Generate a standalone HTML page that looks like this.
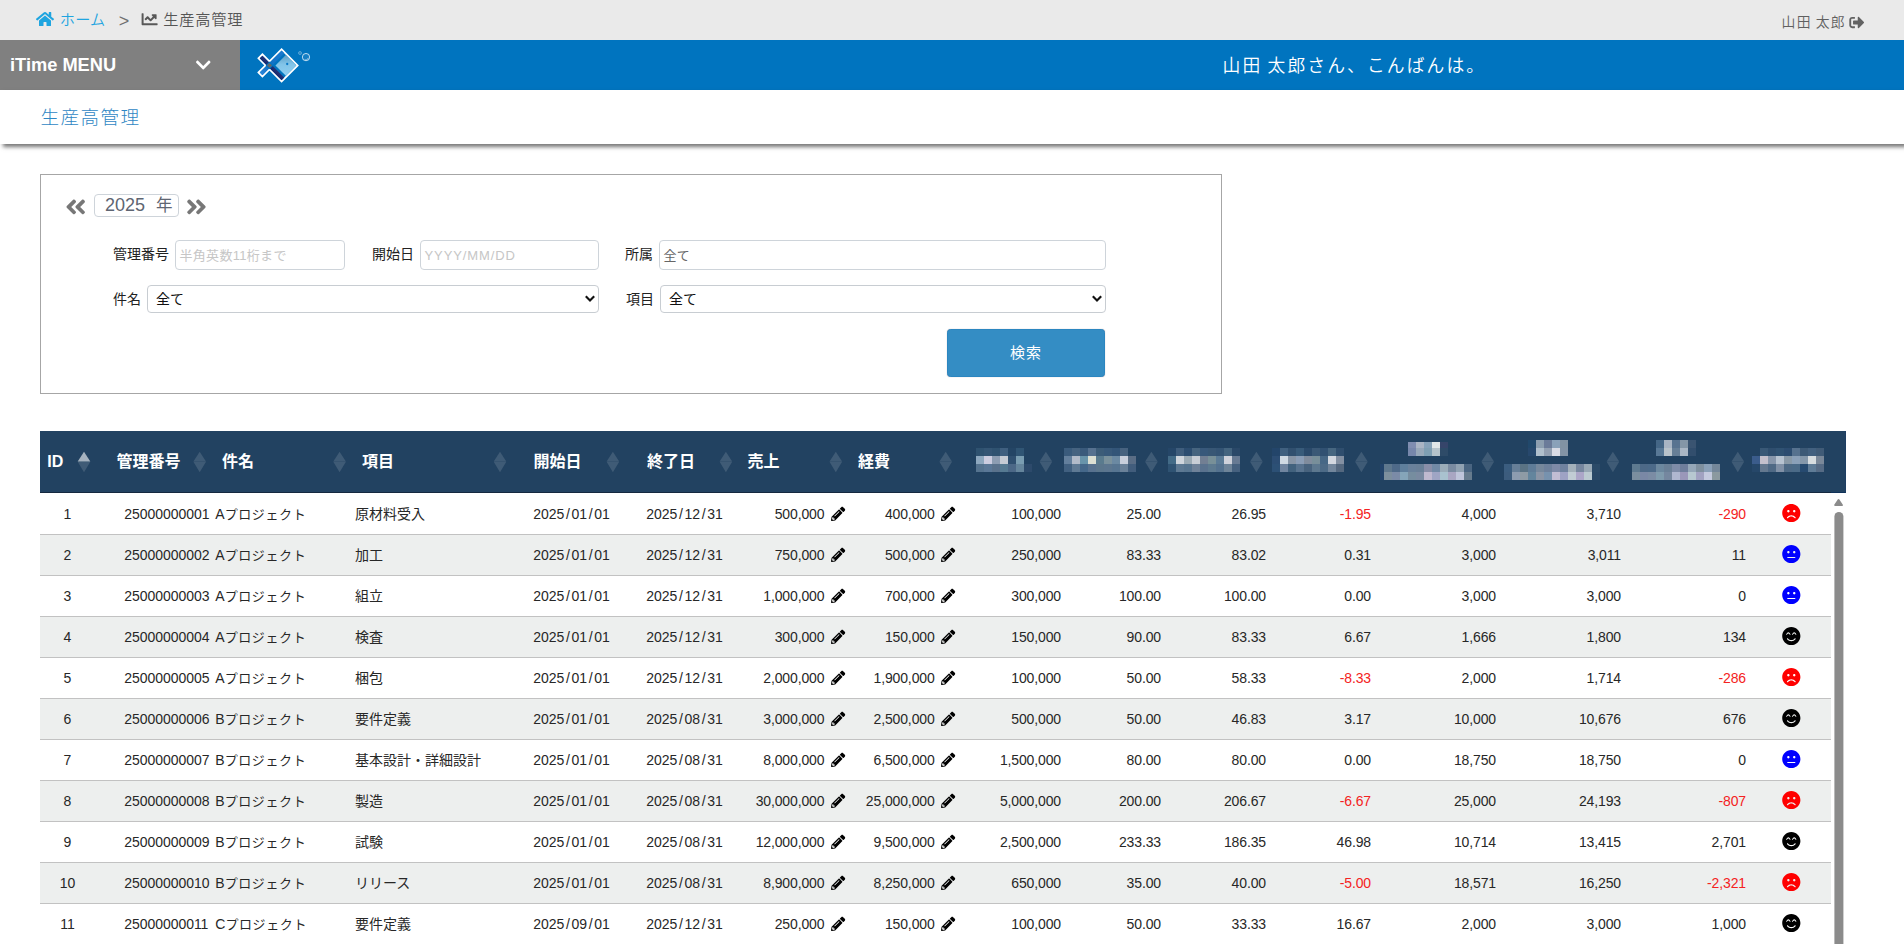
<!DOCTYPE html>
<html lang="ja">
<head>
<meta charset="utf-8">
<title>生産高管理</title>
<style>
*{box-sizing:border-box;}
html,body{margin:0;padding:0;}
body{width:1904px;height:944px;overflow:hidden;background:#fff;position:relative;
  font-family:"Liberation Sans","Noto Sans CJK JP",sans-serif;color:#222;}
.abs{position:absolute;}
svg{position:absolute;display:block;overflow:visible;}
#crumb{left:0;top:0;width:1904px;height:40px;background:#eaeaea;}
.ct{position:absolute;top:0;height:40px;line-height:40px;font-size:16px;white-space:nowrap;}
#menu{left:0;top:40px;width:240px;height:50px;background:#808080;color:#fff;}
#menu .lbl{position:absolute;left:10px;top:0;line-height:50px;font-size:18.250px;font-weight:bold;white-space:nowrap;}
#bluebar{left:240px;top:40px;width:1664px;height:50px;background:#0074bf;}
#welcome{left:1222.500px;top:41px;height:50px;line-height:50px;color:#fff;font-size:17.800px;white-space:nowrap;letter-spacing:2.100px;word-spacing:-1.800px;font-weight:350;}
#titlebar{left:0;top:90px;width:1904px;height:54px;background:#fff;box-shadow:3px 3px 4px rgba(0,0,0,.54);}
#title{left:40.500px;top:90.500px;height:55px;line-height:53px;font-size:18.600px;color:#2f87c4;white-space:nowrap;letter-spacing:1.400px;font-weight:300;}
#sbox{left:40px;top:174px;width:1182px;height:220px;border:1px solid #a6a6a6;background:#fff;}
.lab{position:absolute;font-size:14px;color:#222;white-space:nowrap;line-height:30px;height:30px;}
.inp{position:absolute;height:30px;line-height:29px;border:1px solid #ced4da;border-radius:4px;background:#fff;font-size:13px;color:#c6c6c6;white-space:nowrap;padding-left:3.500px;letter-spacing:0.3px;}
.sel{position:absolute;height:28px;line-height:26px;border:1px solid #c8cdd2;border-radius:4px;background:#fff;font-size:14px;color:#111;white-space:nowrap;padding-left:8px;}
#year{left:94px;top:194px;width:85px;height:23px;border:1px solid #ced4da;border-radius:4px;font-size:18px;line-height:20px;color:#5e6572;white-space:nowrap;padding-left:10px;}
#btn{left:947px;top:329px;width:158px;height:48px;background:#348dc4;border:1px solid #2b86c0;border-radius:3.500px;box-shadow:0 0 1px rgba(80,60,80,.45);color:#fff;font-size:15px;text-align:center;line-height:45px;letter-spacing:1px;}
#thead{left:40px;top:431px;width:1806px;height:62px;background:#224261;border-bottom:1px solid #10325a;border-right:1px solid #1e3e63;}
.th{position:absolute;top:431px;height:62px;line-height:61px;color:#fff;font-weight:bold;font-size:16px;white-space:nowrap;}
.row{position:absolute;left:40px;width:1791px;height:41px;border-bottom:1px solid #c2c2c2;font-size:14px;color:#272727;}
.row.odd{background:#edefee;}
.row span{position:absolute;top:0;height:40px;line-height:40px;white-space:nowrap;}
.row i{font-style:normal;display:inline-block;width:7.300px;text-align:center;}
.r{text-align:right;}
.neg{color:#f42222;}
.n{letter-spacing:-0.05px;}
.r{letter-spacing:-0.13px;}
.k b{font-weight:normal;font-size:13px;letter-spacing:0.600px;}
.c{text-align:center;}
</style>
</head>
<body>
<div id="crumb" class="abs"></div>
<svg style="left:36px;top:11px" width="19" height="17" viewBox="0 0 19 17"><path fill="#1fa5e0" transform="translate(0.000,0.000) scale(0.03125)" d="M280.37 148.26L96 300.11V464a16 16 0 0 0 16 16l112.06-.29a16 16 0 0 0 15.92-16V368a16 16 0 0 1 16-16h64a16 16 0 0 1 16 16v95.64a16 16 0 0 0 16 16.05L464 480a16 16 0 0 0 16-16V300L295.67 148.26a12.19 12.19 0 0 0-15.3 0zM571.6 251.47L488 182.56V44.05a12 12 0 0 0-12-12h-56a12 12 0 0 0-12 12v72.61L318.47 43a48 48 0 0 0-61 0L4.34 251.47a12 12 0 0 0-1.6 16.9l25.5 31A12 12 0 0 0 45.15 301l235.22-193.74a12.19 12.19 0 0 1 15.3 0L530.9 301a12 12 0 0 0 16.9-1.6l25.5-31a12 12 0 0 0-1.7-16.93z"/></svg>
<div class="ct" style="left:59.800px;color:#1fa5e0;letter-spacing:0.200px;font-weight:350;font-size:15.200px;top:0.300px">ホーム</div>
<div class="ct" style="left:118.800px;color:#707070;font-size:18px;top:0.5px">&gt;</div>
<svg style="left:141px;top:11px" width="18" height="18" viewBox="0 0 18 18"><path fill="#585858" transform="translate(0.600,0.300) scale(0.03125)" d="M496 384H64V80c0-8.84-7.16-16-16-16H16C7.16 64 0 71.16 0 80v336c0 17.67 14.33 32 32 32h464c8.84 0 16-7.16 16-16v-32c0-8.84-7.16-16-16-16zM464 96H345.94c-21.38 0-32.09 25.85-16.97 40.97l32.4 32.4L288 242.75l-73.37-73.37c-12.5-12.5-32.76-12.5-45.25 0l-68.69 68.69c-6.25 6.25-6.25 16.38 0 22.63l22.62 22.62c6.25 6.25 16.38 6.25 22.63 0L192 237.25l73.37 73.37c12.5 12.5 32.76 12.5 45.25 0l96-96 32.4 32.4c15.12 15.12 40.97 4.41 40.97-16.97V112c.01-8.84-7.15-16-15.99-16z"/></svg>
<div class="ct" style="left:163.300px;color:#555;font-weight:350;font-size:15.200px;letter-spacing:0.800px;top:0.300px">生産高管理</div>
<div class="ct" style="left:1781.600px;color:#606060;font-size:13.800px;top:2.600px;font-weight:350;letter-spacing:1.250px;word-spacing:-1px">山田 太郎</div>
<svg style="left:1849px;top:15px" width="17" height="16" viewBox="0 0 17 16"><path fill="#626262" transform="translate(0.300,0.000) scale(0.02930)" d="M497 273L329 441c-15 15-41 4.5-41-17v-96H152c-13.3 0-24-10.7-24-24v-96c0-13.3 10.700-24 24-24h136V88c0-21.400 25.900-32 41-17l168 168c9.300 9.400 9.300 24.600 0 34zM192 436v-40c0-6.600-5.400-12-12-12H96c-17.700 0-32-14.300-32-32V160c0-17.700 14.300-32 32-32h84c6.600 0 12-5.400 12-12V76c0-6.600-5.400-12-12-12H96c-53 0-96 43-96 96v192c0 53 43 96 96 96h84c6.600 0 12-5.400 12-12z"/></svg>
<div id="menu" class="abs"><span class="lbl">iTime MENU</span></div>
<svg style="left:195px;top:56px" width="17" height="19" viewBox="0 0 17 19"><path fill="#fff" transform="translate(0.800,0.500) scale(0.03320)" d="M207.029 381.476L12.686 187.132c-9.373-9.373-9.373-24.569 0-33.941l22.667-22.667c9.357-9.357 24.522-9.375 33.901-.04L224 284.505l154.745-154.021c9.379-9.335 24.544-9.317 33.901.04l22.667 22.667c9.373 9.373 9.373 24.569 0 33.941L240.971 381.476c-9.373 9.372-24.569 9.372-33.942 0z"/></svg>
<div id="bluebar" class="abs"></div>
<svg style="left:240px;top:40px" width="90" height="50" viewBox="240 40 90 50">
<defs>
<linearGradient id="lgBody" x1="0" y1="1" x2="1" y2="0"><stop offset="0" stop-color="#8fd0f2"/><stop offset="0.55" stop-color="#82c4e8"/><stop offset="1" stop-color="#5c9fc6"/></linearGradient>
<linearGradient id="lgNavy" x1="0" y1="0" x2="1" y2="0"><stop offset="0" stop-color="#16256a"/><stop offset="1" stop-color="#24357a"/></linearGradient>
<linearGradient id="lgMid" x1="0" y1="0" x2="1" y2="0"><stop offset="0" stop-color="#2a86da"/><stop offset="0.35" stop-color="#0f6fc4"/><stop offset="1" stop-color="#1b7ace"/></linearGradient>
</defs>
<g transform="translate(269.500,65.400) rotate(-45)">
<path d="M-12.800,-2.800H-2.800V-12.800H2.800V-2.800H19.900V19.900H-2.800V2.800H-12.800Z" fill="#0074bf" stroke="#fff" stroke-width="1.8" stroke-linejoin="miter"/>
<rect x="-11.900" y="-1.900" width="30.900" height="3.800" fill="url(#lgMid)"/>
<rect x="-1.900" y="-11.900" width="3.800" height="30.900" fill="url(#lgNavy)"/>
<rect x="-2.700" y="-2.700" width="5.400" height="5.400" fill="#0074bf"/>
<rect x="4.200" y="4.200" width="14.700" height="14.700" fill="url(#lgBody)"/>
<rect x="-1.750" y="-1.750" width="3.500" height="3.500" fill="#666"/>
</g>
<circle cx="287.200" cy="64" r="1.150" fill="#0a78c6"/>
<circle cx="300" cy="53" r="1.500" fill="#fff" fill-opacity=".12" stroke="#fff" stroke-opacity=".5" stroke-width=".6"/>
<circle cx="306" cy="57.100" r="3.650" fill="#fff" fill-opacity=".08" stroke="#fff" stroke-opacity=".8" stroke-width=".9"/>
<path d="M304.800,59.500a2.300,2.300 0 0 0 3.400,-1.700" fill="none" stroke="#fff" stroke-opacity=".5" stroke-width=".9"/>
</svg>
<div id="welcome" class="abs">山田 太郎さん、こんばんは。</div>
<div id="titlebar" class="abs"></div>
<div id="title" class="abs">生産高管理</div>
<div id="sbox" class="abs"></div>
<svg style="left:65px;top:195px" width="23" height="25" viewBox="0 0 23 25"><path fill="#777" transform="translate(0.300,0.000) scale(0.04648)" d="M223.7 239l136-136c9.400-9.400 24.600-9.400 33.900 0l22.600 22.600c9.400 9.400 9.400 24.600 0 33.900L319.900 256l96.400 96.400c9.400 9.400 9.400 24.600 0 33.900L393.700 409c-9.400 9.400-24.600 9.400-33.900 0l-136-136c-9.500-9.400-9.500-24.600-.1-34zm-192 34l136 136c9.400 9.400 24.600 9.400 33.900 0l22.600-22.600c9.400-9.400 9.400-24.600 0-33.900L127.900 256l96.400-96.400c9.400-9.400 9.400-24.600 0-33.900L201.700 103c-9.400-9.400-24.600-9.400-33.900 0l-136 136c-9.500 9.400-9.500 24.600-.1 34z"/></svg>
<div id="year" class="abs">2025<span style="font-size:16.500px;margin-left:11px;position:relative;top:-0.5px">年</span></div>
<svg style="left:186px;top:195px" width="22" height="25" viewBox="0 0 22 25"><path fill="#777" transform="translate(20.825,0.000) scale(-0.04648,0.04648)" d="M223.7 239l136-136c9.400-9.400 24.600-9.400 33.900 0l22.600 22.600c9.400 9.400 9.400 24.600 0 33.900L319.900 256l96.400 96.400c9.400 9.400 9.400 24.600 0 33.900L393.700 409c-9.400 9.400-24.600 9.400-33.900 0l-136-136c-9.500-9.400-9.500-24.600-.1-34zm-192 34l136 136c9.400 9.400 24.600 9.400 33.900 0l22.600-22.600c9.400-9.400 9.400-24.600 0-33.900L127.900 256l96.400-96.400c9.400-9.400 9.400-24.600 0-33.900L201.700 103c-9.400-9.400-24.600-9.400-33.900 0l-136 136c-9.500 9.400-9.500 24.600-.1 34z"/></svg>
<div class="lab" style="left:113px;top:238.500px">管理番号</div>
<div class="inp" style="left:175px;top:240px;width:170px">半角英数11桁まで</div>
<div class="lab" style="left:372px;top:238.500px">開始日</div>
<div class="inp" style="left:420px;top:240px;width:179px;letter-spacing:0.9px">YYYY/MM/DD</div>
<div class="lab" style="left:625px;top:238.500px">所属</div>
<div class="inp" style="left:659px;top:240px;width:447px;color:#666">全て</div>
<div class="lab" style="left:113px;top:284px">件名</div>
<div class="sel" style="left:147px;top:285px;width:452px">全て</div>
<svg style="left:585px;top:295px" width="10" height="7" viewBox="0 0 10 7"><path d="M0.800 1.200L5 5.400L9.200 1.200" fill="none" stroke="#111" stroke-width="2.150"/></svg>
<div class="lab" style="left:626px;top:284px">項目</div>
<div class="sel" style="left:660px;top:285px;width:446px">全て</div>
<svg style="left:1092px;top:295px" width="10" height="7" viewBox="0 0 10 7"><path d="M0.800 1.200L5 5.400L9.200 1.200" fill="none" stroke="#111" stroke-width="2.150"/></svg>
<div id="btn" class="abs">検索</div>
<div id="thead" class="abs"></div>
<div class="abs" style="left:40px;top:492px;width:1791px;height:1px;background:#15293f"></div>
<div class="th" style="left:47.2px">ID</div>
<div class="th" style="left:116.5px">管理番号</div>
<div class="th" style="left:222px">件名</div>
<div class="th" style="left:362px">項目</div>
<div class="th" style="left:533.5px">開始日</div>
<div class="th" style="left:647px">終了日</div>
<div class="th" style="left:747.5px">売上</div>
<div class="th" style="left:858px">経費</div>
<svg style="left:0;top:431px" width="1904" height="62" viewBox="0 431 1904 62" shape-rendering="crispEdges">
<rect x="976" y="448" width="8" height="8" fill="#2f5270"/><rect x="984" y="448" width="8" height="8" fill="#345574"/><rect x="992" y="448" width="8" height="8" fill="#2f5270"/><rect x="1000" y="448" width="8" height="8" fill="#3f5f7f"/><rect x="1008" y="448" width="8" height="8" fill="#244565"/><rect x="1016" y="448" width="8" height="8" fill="#305574"/><rect x="976" y="456" width="8" height="8" fill="#8ea8bf"/><rect x="984" y="456" width="8" height="8" fill="#cccde0"/><rect x="992" y="456" width="8" height="8" fill="#8d9db2"/><rect x="1000" y="456" width="8" height="8" fill="#c5cbd4"/><rect x="1008" y="456" width="8" height="8" fill="#305070"/><rect x="1016" y="456" width="8" height="8" fill="#7a9db1"/><rect x="976" y="464" width="8" height="8" fill="#55738f"/><rect x="984" y="464" width="8" height="8" fill="#5b7897"/><rect x="992" y="464" width="8" height="8" fill="#5a728c"/><rect x="1000" y="464" width="8" height="8" fill="#567a92"/><rect x="1008" y="464" width="8" height="8" fill="#4c6887"/><rect x="1016" y="464" width="8" height="8" fill="#65859c"/><rect x="1024" y="464" width="8" height="8" fill="#2d4a6b"/>
<rect x="1064" y="448" width="8" height="8" fill="#3a5b7c"/><rect x="1072" y="448" width="8" height="8" fill="#466380"/><rect x="1080" y="448" width="8" height="8" fill="#3a5a7b"/><rect x="1088" y="448" width="8" height="8" fill="#56718f"/><rect x="1096" y="448" width="8" height="8" fill="#3c5c78"/><rect x="1104" y="448" width="8" height="8" fill="#38597a"/><rect x="1112" y="448" width="8" height="8" fill="#335578"/><rect x="1120" y="448" width="8" height="8" fill="#47627f"/><rect x="1064" y="456" width="8" height="8" fill="#637f9c"/><rect x="1072" y="456" width="8" height="8" fill="#b2bbc9"/><rect x="1080" y="456" width="8" height="8" fill="#6894aa"/><rect x="1088" y="456" width="8" height="8" fill="#dde0d3"/><rect x="1096" y="456" width="8" height="8" fill="#5a7b8e"/><rect x="1104" y="456" width="8" height="8" fill="#7a919c"/><rect x="1112" y="456" width="8" height="8" fill="#6b89a2"/><rect x="1120" y="456" width="8" height="8" fill="#c9cfdc"/><rect x="1128" y="456" width="8" height="8" fill="#5a6d85"/><rect x="1064" y="464" width="8" height="8" fill="#416080"/><rect x="1072" y="464" width="8" height="8" fill="#5f7a94"/><rect x="1080" y="464" width="8" height="8" fill="#45688a"/><rect x="1088" y="464" width="8" height="8" fill="#58728f"/><rect x="1096" y="464" width="8" height="8" fill="#5b768c"/><rect x="1104" y="464" width="8" height="8" fill="#5c768f"/><rect x="1112" y="464" width="8" height="8" fill="#577591"/><rect x="1120" y="464" width="8" height="8" fill="#6a8199"/><rect x="1128" y="464" width="8" height="8" fill="#425d7c"/>
<rect x="1168" y="448" width="8" height="8" fill="#254668"/><rect x="1176" y="448" width="8" height="8" fill="#3f5d7c"/><rect x="1184" y="448" width="8" height="8" fill="#2c4d70"/><rect x="1192" y="448" width="8" height="8" fill="#46647f"/><rect x="1200" y="448" width="8" height="8" fill="#38587a"/><rect x="1208" y="448" width="8" height="8" fill="#385775"/><rect x="1216" y="448" width="8" height="8" fill="#345474"/><rect x="1224" y="448" width="8" height="8" fill="#44647f"/><rect x="1232" y="448" width="8" height="8" fill="#2a4868"/><rect x="1168" y="456" width="8" height="8" fill="#436b87"/><rect x="1176" y="456" width="8" height="8" fill="#d0d6dd"/><rect x="1184" y="456" width="8" height="8" fill="#9cabb5"/><rect x="1192" y="456" width="8" height="8" fill="#c8ced6"/><rect x="1200" y="456" width="8" height="8" fill="#727f93"/><rect x="1208" y="456" width="8" height="8" fill="#789098"/><rect x="1216" y="456" width="8" height="8" fill="#5b7b96"/><rect x="1224" y="456" width="8" height="8" fill="#cfd2db"/><rect x="1232" y="456" width="8" height="8" fill="#677a93"/><rect x="1168" y="464" width="8" height="8" fill="#2f5373"/><rect x="1176" y="464" width="8" height="8" fill="#5d7993"/><rect x="1184" y="464" width="8" height="8" fill="#577590"/><rect x="1192" y="464" width="8" height="8" fill="#6f8299"/><rect x="1200" y="464" width="8" height="8" fill="#5a728e"/><rect x="1208" y="464" width="8" height="8" fill="#5d7a90"/><rect x="1216" y="464" width="8" height="8" fill="#54728f"/><rect x="1224" y="464" width="8" height="8" fill="#6e8499"/><rect x="1232" y="464" width="8" height="8" fill="#46617f"/>
<rect x="1272" y="448" width="8" height="8" fill="#23456a"/><rect x="1280" y="448" width="8" height="8" fill="#40607f"/><rect x="1288" y="448" width="8" height="8" fill="#31506f"/><rect x="1296" y="448" width="8" height="8" fill="#385b7a"/><rect x="1304" y="448" width="8" height="8" fill="#2b4a6b"/><rect x="1312" y="448" width="8" height="8" fill="#3a5876"/><rect x="1320" y="448" width="8" height="8" fill="#315172"/><rect x="1328" y="448" width="8" height="8" fill="#466680"/><rect x="1336" y="448" width="8" height="8" fill="#2f4e6e"/><rect x="1272" y="456" width="8" height="8" fill="#2c4d73"/><rect x="1280" y="456" width="8" height="8" fill="#d0dae3"/><rect x="1288" y="456" width="8" height="8" fill="#8795a6"/><rect x="1296" y="456" width="8" height="8" fill="#8a9db6"/><rect x="1304" y="456" width="8" height="8" fill="#808c9d"/><rect x="1312" y="456" width="8" height="8" fill="#788f9a"/><rect x="1320" y="456" width="8" height="8" fill="#476886"/><rect x="1328" y="456" width="8" height="8" fill="#d3d8e0"/><rect x="1336" y="456" width="8" height="8" fill="#8390a2"/><rect x="1272" y="464" width="8" height="8" fill="#2c5075"/><rect x="1280" y="464" width="8" height="8" fill="#7085a0"/><rect x="1288" y="464" width="8" height="8" fill="#42627e"/><rect x="1296" y="464" width="8" height="8" fill="#58738f"/><rect x="1304" y="464" width="8" height="8" fill="#48637e"/><rect x="1312" y="464" width="8" height="8" fill="#5d788f"/><rect x="1320" y="464" width="8" height="8" fill="#4d6b87"/><rect x="1328" y="464" width="8" height="8" fill="#72869c"/><rect x="1336" y="464" width="8" height="8" fill="#54687f"/>
<rect x="1408" y="442" width="8" height="6" fill="#7f8db0"/><rect x="1416" y="442" width="8" height="6" fill="#aab5c4"/><rect x="1424" y="442" width="8" height="6" fill="#86a2b9"/><rect x="1432" y="442" width="8" height="6" fill="#e0e6e8"/><rect x="1440" y="442" width="8" height="6" fill="#36456a"/><rect x="1408" y="448" width="8" height="8" fill="#7787ab"/><rect x="1416" y="448" width="8" height="8" fill="#98a8b9"/><rect x="1424" y="448" width="8" height="8" fill="#7f9fb3"/><rect x="1432" y="448" width="8" height="8" fill="#b5c3cb"/><rect x="1440" y="448" width="8" height="8" fill="#2e4b68"/>
<rect x="1384" y="464" width="8" height="8" fill="#5f788e"/><rect x="1392" y="464" width="8" height="8" fill="#4f6a89"/><rect x="1400" y="464" width="8" height="8" fill="#5f7f9c"/><rect x="1408" y="464" width="8" height="8" fill="#6a819b"/><rect x="1416" y="464" width="8" height="8" fill="#6a8098"/><rect x="1424" y="464" width="8" height="8" fill="#898ea8"/><rect x="1432" y="464" width="8" height="8" fill="#728aa6"/><rect x="1440" y="464" width="8" height="8" fill="#9aacb9"/><rect x="1448" y="464" width="8" height="8" fill="#7a8ba1"/><rect x="1456" y="464" width="8" height="8" fill="#91a2b2"/><rect x="1464" y="464" width="8" height="8" fill="#4a6581"/><rect x="1384" y="472" width="8" height="8" fill="#7d8f9e"/><rect x="1392" y="472" width="8" height="8" fill="#7b8ba7"/><rect x="1400" y="472" width="8" height="8" fill="#85a5b9"/><rect x="1408" y="472" width="8" height="8" fill="#768d9f"/><rect x="1416" y="472" width="8" height="8" fill="#7a8aa1"/><rect x="1424" y="472" width="8" height="8" fill="#c0b9cf"/><rect x="1432" y="472" width="8" height="8" fill="#9fa5c4"/><rect x="1440" y="472" width="8" height="8" fill="#a9c2cf"/><rect x="1448" y="472" width="8" height="8" fill="#a9a6c2"/><rect x="1456" y="472" width="8" height="8" fill="#bfc5da"/><rect x="1464" y="472" width="8" height="8" fill="#667b8d"/>
<rect x="1528" y="440" width="8" height="8" fill="#21486b"/><rect x="1536" y="440" width="8" height="8" fill="#8d9fb0"/><rect x="1544" y="440" width="8" height="8" fill="#6b7b99"/><rect x="1552" y="440" width="8" height="8" fill="#8aa1b9"/><rect x="1560" y="440" width="8" height="8" fill="#8293a3"/><rect x="1528" y="448" width="8" height="8" fill="#27486d"/><rect x="1536" y="448" width="8" height="8" fill="#b0bfcc"/><rect x="1544" y="448" width="8" height="8" fill="#929fb1"/><rect x="1552" y="448" width="8" height="8" fill="#d9dbe5"/><rect x="1560" y="448" width="8" height="8" fill="#8393a5"/>
<rect x="1504" y="464" width="8" height="8" fill="#3b5d7f"/><rect x="1512" y="464" width="8" height="8" fill="#677f98"/><rect x="1520" y="464" width="8" height="8" fill="#5a7384"/><rect x="1528" y="464" width="8" height="8" fill="#5f7c97"/><rect x="1536" y="464" width="8" height="8" fill="#76889c"/><rect x="1544" y="464" width="8" height="8" fill="#6e819c"/><rect x="1552" y="464" width="8" height="8" fill="#7e8aa7"/><rect x="1560" y="464" width="8" height="8" fill="#6f829f"/><rect x="1568" y="464" width="8" height="8" fill="#a3b0ba"/><rect x="1576" y="464" width="8" height="8" fill="#77879f"/><rect x="1584" y="464" width="8" height="8" fill="#98a8b5"/><rect x="1592" y="464" width="8" height="8" fill="#2b4a68"/><rect x="1504" y="472" width="8" height="8" fill="#3c5c7d"/><rect x="1512" y="472" width="8" height="8" fill="#8d9cb0"/><rect x="1520" y="472" width="8" height="8" fill="#8e9ba5"/><rect x="1528" y="472" width="8" height="8" fill="#63859d"/><rect x="1536" y="472" width="8" height="8" fill="#8a95a6"/><rect x="1544" y="472" width="8" height="8" fill="#7792ae"/><rect x="1552" y="472" width="8" height="8" fill="#c1bdd3"/><rect x="1560" y="472" width="8" height="8" fill="#9ea2c4"/><rect x="1568" y="472" width="8" height="8" fill="#c1ccd4"/><rect x="1576" y="472" width="8" height="8" fill="#aca6c8"/><rect x="1584" y="472" width="8" height="8" fill="#bccad1"/><rect x="1592" y="472" width="8" height="8" fill="#2a4867"/>
<rect x="1656" y="440" width="8" height="8" fill="#446686"/><rect x="1664" y="440" width="8" height="8" fill="#a9b5c4"/><rect x="1672" y="440" width="8" height="8" fill="#587390"/><rect x="1680" y="440" width="8" height="8" fill="#8496a7"/><rect x="1688" y="440" width="8" height="8" fill="#3a5471"/><rect x="1656" y="448" width="8" height="8" fill="#587896"/><rect x="1664" y="448" width="8" height="8" fill="#b9c3cb"/><rect x="1672" y="448" width="8" height="8" fill="#677f97"/><rect x="1680" y="448" width="8" height="8" fill="#aab7c5"/><rect x="1688" y="448" width="8" height="8" fill="#324e6d"/>
<rect x="1632" y="464" width="8" height="8" fill="#5e7a90"/><rect x="1640" y="464" width="8" height="8" fill="#4d6987"/><rect x="1648" y="464" width="8" height="8" fill="#4c6a89"/><rect x="1656" y="464" width="8" height="8" fill="#6c889f"/><rect x="1664" y="464" width="8" height="8" fill="#6a8097"/><rect x="1672" y="464" width="8" height="8" fill="#7e8ca8"/><rect x="1680" y="464" width="8" height="8" fill="#6f7e9c"/><rect x="1688" y="464" width="8" height="8" fill="#95a7b8"/><rect x="1696" y="464" width="8" height="8" fill="#7f909f"/><rect x="1704" y="464" width="8" height="8" fill="#8aa0b8"/><rect x="1712" y="464" width="8" height="8" fill="#74879a"/><rect x="1632" y="472" width="8" height="8" fill="#7a8e9f"/><rect x="1640" y="472" width="8" height="8" fill="#7a88a5"/><rect x="1648" y="472" width="8" height="8" fill="#7b8ca4"/><rect x="1656" y="472" width="8" height="8" fill="#7f9bad"/><rect x="1664" y="472" width="8" height="8" fill="#75879f"/><rect x="1672" y="472" width="8" height="8" fill="#afb7d0"/><rect x="1680" y="472" width="8" height="8" fill="#9a97b9"/><rect x="1688" y="472" width="8" height="8" fill="#b7c8d0"/><rect x="1696" y="472" width="8" height="8" fill="#a1a2c1"/><rect x="1704" y="472" width="8" height="8" fill="#c4cadf"/><rect x="1712" y="472" width="8" height="8" fill="#8b999f"/>
<rect x="1760" y="448" width="8" height="8" fill="#395876"/><rect x="1768" y="448" width="8" height="8" fill="#2f4e6e"/><rect x="1776" y="448" width="8" height="8" fill="#305272"/><rect x="1784" y="448" width="8" height="8" fill="#2c4c70"/><rect x="1792" y="448" width="8" height="8" fill="#56718e"/><rect x="1800" y="448" width="8" height="8" fill="#3c5976"/><rect x="1808" y="448" width="8" height="8" fill="#42607f"/><rect x="1816" y="448" width="8" height="8" fill="#405b77"/><rect x="1752" y="456" width="8" height="8" fill="#3b5c8b"/><rect x="1760" y="456" width="8" height="8" fill="#c4c0cc"/><rect x="1768" y="456" width="8" height="8" fill="#8796ab"/><rect x="1776" y="456" width="8" height="8" fill="#b7c3d1"/><rect x="1784" y="456" width="8" height="8" fill="#8999a7"/><rect x="1792" y="456" width="8" height="8" fill="#8ba0b8"/><rect x="1800" y="456" width="8" height="8" fill="#8497aa"/><rect x="1808" y="456" width="8" height="8" fill="#d7dde0"/><rect x="1816" y="456" width="8" height="8" fill="#7a8899"/><rect x="1752" y="464" width="8" height="8" fill="#264769"/><rect x="1760" y="464" width="8" height="8" fill="#64788f"/><rect x="1768" y="464" width="8" height="8" fill="#4f6985"/><rect x="1776" y="464" width="8" height="8" fill="#8090a6"/><rect x="1784" y="464" width="8" height="8" fill="#4d6985"/><rect x="1792" y="464" width="8" height="8" fill="#4b6a87"/><rect x="1800" y="464" width="8" height="8" fill="#264a70"/><rect x="1808" y="464" width="8" height="8" fill="#5f7c97"/><rect x="1816" y="464" width="8" height="8" fill="#566b85"/>
<rect x="1380" y="464" width="4" height="16" fill="#23446b"/>
</svg>
<svg style="left:0;top:431px" width="1904" height="62" viewBox="0 431 1904 62">
<path d="M84 451.800l6.300 9.700h-12.600z" fill="#fff" fill-opacity="0.6"/><path d="M84 472.300l6.300-10.500h-12.600z" fill="#fff" fill-opacity="0.135"/>
<path d="M199.7 451.800l6.300 9.700h-12.600z" fill="#fff" fill-opacity="0.135"/><path d="M199.7 472.300l6.300-10.500h-12.600z" fill="#fff" fill-opacity="0.135"/>
<path d="M339.6 451.800l6.300 9.700h-12.600z" fill="#fff" fill-opacity="0.135"/><path d="M339.6 472.300l6.300-10.500h-12.600z" fill="#fff" fill-opacity="0.135"/>
<path d="M500 451.800l6.300 9.700h-12.600z" fill="#fff" fill-opacity="0.135"/><path d="M500 472.300l6.300-10.500h-12.600z" fill="#fff" fill-opacity="0.135"/>
<path d="M612.9 451.800l6.300 9.700h-12.600z" fill="#fff" fill-opacity="0.135"/><path d="M612.9 472.300l6.300-10.500h-12.600z" fill="#fff" fill-opacity="0.135"/>
<path d="M725.9 451.800l6.300 9.700h-12.600z" fill="#fff" fill-opacity="0.135"/><path d="M725.9 472.300l6.300-10.500h-12.600z" fill="#fff" fill-opacity="0.135"/>
<path d="M835.8 451.800l6.300 9.700h-12.600z" fill="#fff" fill-opacity="0.135"/><path d="M835.8 472.300l6.300-10.500h-12.600z" fill="#fff" fill-opacity="0.135"/>
<path d="M945.7 451.800l6.300 9.700h-12.600z" fill="#fff" fill-opacity="0.135"/><path d="M945.7 472.300l6.300-10.500h-12.600z" fill="#fff" fill-opacity="0.135"/>
<path d="M1045.9 451.800l6.300 9.700h-12.600z" fill="#fff" fill-opacity="0.135"/><path d="M1045.9 472.300l6.300-10.500h-12.600z" fill="#fff" fill-opacity="0.135"/>
<path d="M1151.4 451.800l6.300 9.700h-12.600z" fill="#fff" fill-opacity="0.135"/><path d="M1151.4 472.300l6.300-10.500h-12.600z" fill="#fff" fill-opacity="0.135"/>
<path d="M1256.4 451.800l6.300 9.700h-12.600z" fill="#fff" fill-opacity="0.135"/><path d="M1256.4 472.300l6.300-10.500h-12.600z" fill="#fff" fill-opacity="0.135"/>
<path d="M1361.4 451.800l6.300 9.700h-12.600z" fill="#fff" fill-opacity="0.135"/><path d="M1361.4 472.300l6.300-10.500h-12.600z" fill="#fff" fill-opacity="0.135"/>
<path d="M1487.7 451.800l6.300 9.700h-12.600z" fill="#fff" fill-opacity="0.135"/><path d="M1487.7 472.300l6.300-10.500h-12.600z" fill="#fff" fill-opacity="0.135"/>
<path d="M1612.9 451.800l6.300 9.700h-12.600z" fill="#fff" fill-opacity="0.135"/><path d="M1612.9 472.300l6.300-10.500h-12.600z" fill="#fff" fill-opacity="0.135"/>
<path d="M1737.8 451.800l6.300 9.700h-12.600z" fill="#fff" fill-opacity="0.135"/><path d="M1737.8 472.300l6.300-10.500h-12.600z" fill="#fff" fill-opacity="0.135"/>
</svg>
<div class="row" style="top:494px"><span class="c" style="left:7.500px;width:40px">1</span><span class="n" style="left:84.300px">25000000001</span><span class="k" style="left:175.300px">A<b>プロジェクト</b></span><span style="left:315px">原材料受入</span><span class="n" style="left:493.300px">2025<i>/</i>01<i>/</i>01</span><span class="n" style="left:606.300px">2025<i>/</i>12<i>/</i>31</span><span class="n r" style="right:1006.6px">500,000</span><span class="n r" style="right:896.4px">400,000</span><span class="n r" style="right:770px">100,000</span><span class="n r" style="right:670px">25.00</span><span class="n r" style="right:565px">26.95</span><span class="n r neg" style="right:460px">-1.95</span><span class="n r" style="right:335px">4,000</span><span class="n r" style="right:210px">3,710</span><span class="n r neg" style="right:85px">-290</span></div>
<svg style="left:831px;top:506px" width="16" height="17" viewBox="0 0 16 17"><path fill="#000" transform="translate(0.000,0.800) scale(0.02773)" d="M497.9 142.1l-46.1 46.1c-4.700 4.700-12.300 4.700-17 0l-111-111c-4.700-4.700-4.700-12.300 0-17l46.100-46.100c18.700-18.700 49.100-18.700 67.900 0l60.100 60.100c18.800 18.700 18.800 49.100 0 67.900zM284.200 99.800L21.600 362.400.4 483.900c-2.900 16.400 11.400 30.600 27.800 27.800l121.500-21.300 262.600-262.600c4.700-4.700 4.700-12.300 0-17l-111-111c-4.800-4.700-12.400-4.700-17.100 0zM124.100 339.900c-5.500-5.500-5.500-14.300 0-19.800l154-154c5.500-5.500 14.300-5.500 19.800 0s5.500 14.300 0 19.800l-154 154c-5.500 5.500-14.300 5.500-19.800 0zM88 424h48v36.300l-64.500 11.300-31.100-31.100L51.700 376H88v48z"/></svg>
<svg style="left:941px;top:506px" width="16" height="17" viewBox="0 0 16 17"><path fill="#000" transform="translate(0.000,0.800) scale(0.02773)" d="M497.9 142.1l-46.1 46.1c-4.700 4.700-12.300 4.700-17 0l-111-111c-4.700-4.700-4.700-12.300 0-17l46.100-46.100c18.700-18.700 49.100-18.700 67.900 0l60.100 60.100c18.800 18.700 18.800 49.100 0 67.900zM284.200 99.800L21.600 362.400.4 483.900c-2.900 16.400 11.400 30.600 27.800 27.800l121.500-21.300 262.600-262.600c4.700-4.700 4.700-12.300 0-17l-111-111c-4.800-4.700-12.400-4.700-17.100 0zM124.100 339.900c-5.500-5.500-5.500-14.300 0-19.800l154-154c5.500-5.500 14.300-5.500 19.800 0s5.500 14.300 0 19.800l-154 154c-5.500 5.500-14.300 5.500-19.800 0zM88 424h48v36.300l-64.500 11.300-31.100-31.100L51.700 376H88v48z"/></svg>
<svg style="left:1782px;top:503px" width="20" height="21" viewBox="0 0 20 21"><path fill="#ff0000" transform="translate(0.200,0.600) scale(0.03672)" d="M248 8C111 8 0 119 0 256s111 248 248 248 248-111 248-248S385 8 248 8zm80 168c17.700 0 32 14.300 32 32s-14.300 32-32 32-32-14.300-32-32 14.300-32 32-32zm-160 0c17.700 0 32 14.300 32 32s-14.300 32-32 32-32-14.300-32-32 14.300-32 32-32zm170.200 218.200C315.800 367.400 282.900 352 248 352s-67.800 15.400-90.200 42.200c-13.500 16.300-38.100-4.200-24.600-20.500C161.700 339.600 203.600 320 248 320s86.300 19.600 114.700 53.800c13.600 16.200-11 36.700-24.500 20.400z"/></svg>
<div class="row odd" style="top:535px"><span class="c" style="left:7.500px;width:40px">2</span><span class="n" style="left:84.300px">25000000002</span><span class="k" style="left:175.300px">A<b>プロジェクト</b></span><span style="left:315px">加工</span><span class="n" style="left:493.300px">2025<i>/</i>01<i>/</i>01</span><span class="n" style="left:606.300px">2025<i>/</i>12<i>/</i>31</span><span class="n r" style="right:1006.6px">750,000</span><span class="n r" style="right:896.4px">500,000</span><span class="n r" style="right:770px">250,000</span><span class="n r" style="right:670px">83.33</span><span class="n r" style="right:565px">83.02</span><span class="n r" style="right:460px">0.31</span><span class="n r" style="right:335px">3,000</span><span class="n r" style="right:210px">3,011</span><span class="n r" style="right:85px">11</span></div>
<svg style="left:831px;top:547px" width="16" height="16" viewBox="0 0 16 16"><path fill="#000" transform="translate(0.000,0.800) scale(0.02773)" d="M497.9 142.1l-46.1 46.1c-4.700 4.700-12.300 4.700-17 0l-111-111c-4.700-4.700-4.700-12.300 0-17l46.100-46.100c18.700-18.700 49.100-18.700 67.900 0l60.100 60.100c18.800 18.700 18.800 49.100 0 67.900zM284.200 99.800L21.600 362.400.4 483.900c-2.900 16.400 11.400 30.600 27.800 27.800l121.500-21.300 262.600-262.600c4.700-4.700 4.700-12.300 0-17l-111-111c-4.800-4.700-12.400-4.700-17.100 0zM124.100 339.900c-5.500-5.500-5.500-14.300 0-19.800l154-154c5.500-5.500 14.300-5.500 19.800 0s5.500 14.300 0 19.800l-154 154c-5.500 5.500-14.300 5.500-19.800 0zM88 424h48v36.300l-64.500 11.300-31.100-31.100L51.700 376H88v48z"/></svg>
<svg style="left:941px;top:547px" width="16" height="16" viewBox="0 0 16 16"><path fill="#000" transform="translate(0.000,0.800) scale(0.02773)" d="M497.9 142.1l-46.1 46.1c-4.700 4.700-12.300 4.700-17 0l-111-111c-4.700-4.700-4.700-12.300 0-17l46.100-46.100c18.700-18.700 49.100-18.700 67.900 0l60.100 60.100c18.800 18.700 18.800 49.100 0 67.900zM284.200 99.800L21.600 362.400.4 483.900c-2.900 16.400 11.400 30.600 27.800 27.800l121.500-21.300 262.600-262.600c4.700-4.700 4.700-12.300 0-17l-111-111c-4.800-4.700-12.400-4.700-17.100 0zM124.100 339.900c-5.500-5.500-5.500-14.300 0-19.800l154-154c5.500-5.500 14.300-5.500 19.800 0s5.500 14.300 0 19.800l-154 154c-5.500 5.500-14.300 5.500-19.800 0zM88 424h48v36.300l-64.500 11.300-31.100-31.100L51.700 376H88v48z"/></svg>
<svg style="left:1782px;top:544px" width="20" height="21" viewBox="0 0 20 21"><path fill="#0000ff" transform="translate(0.200,0.600) scale(0.03672)" d="M248 8C111 8 0 119 0 256s111 248 248 248 248-111 248-248S385 8 248 8zm-80 168c17.700 0 32 14.300 32 32s-14.300 32-32 32-32-14.300-32-32 14.300-32 32-32zm176 192H152c-21.200 0-21.200-32 0-32h192c21.200 0 21.200 32 0 32zm-16-128c-17.700 0-32-14.300-32-32s14.300-32 32-32 32 14.300 32 32-14.300 32-32 32z"/></svg>
<div class="row" style="top:576px"><span class="c" style="left:7.500px;width:40px">3</span><span class="n" style="left:84.300px">25000000003</span><span class="k" style="left:175.300px">A<b>プロジェクト</b></span><span style="left:315px">組立</span><span class="n" style="left:493.300px">2025<i>/</i>01<i>/</i>01</span><span class="n" style="left:606.300px">2025<i>/</i>12<i>/</i>31</span><span class="n r" style="right:1006.6px">1,000,000</span><span class="n r" style="right:896.4px">700,000</span><span class="n r" style="right:770px">300,000</span><span class="n r" style="right:670px">100.00</span><span class="n r" style="right:565px">100.00</span><span class="n r" style="right:460px">0.00</span><span class="n r" style="right:335px">3,000</span><span class="n r" style="right:210px">3,000</span><span class="n r" style="right:85px">0</span></div>
<svg style="left:831px;top:588px" width="16" height="16" viewBox="0 0 16 16"><path fill="#000" transform="translate(0.000,0.800) scale(0.02773)" d="M497.9 142.1l-46.1 46.1c-4.700 4.700-12.300 4.700-17 0l-111-111c-4.700-4.700-4.700-12.300 0-17l46.100-46.100c18.700-18.700 49.100-18.700 67.900 0l60.100 60.100c18.800 18.700 18.800 49.100 0 67.900zM284.200 99.800L21.600 362.400.4 483.900c-2.900 16.400 11.400 30.600 27.800 27.800l121.500-21.300 262.600-262.600c4.700-4.700 4.700-12.300 0-17l-111-111c-4.800-4.700-12.400-4.700-17.100 0zM124.100 339.900c-5.500-5.500-5.500-14.300 0-19.800l154-154c5.500-5.500 14.300-5.500 19.800 0s5.500 14.300 0 19.800l-154 154c-5.500 5.500-14.300 5.500-19.800 0zM88 424h48v36.300l-64.500 11.300-31.100-31.100L51.700 376H88v48z"/></svg>
<svg style="left:941px;top:588px" width="16" height="16" viewBox="0 0 16 16"><path fill="#000" transform="translate(0.000,0.800) scale(0.02773)" d="M497.9 142.1l-46.1 46.1c-4.700 4.700-12.300 4.700-17 0l-111-111c-4.700-4.700-4.700-12.300 0-17l46.100-46.100c18.700-18.700 49.100-18.700 67.900 0l60.100 60.100c18.800 18.700 18.800 49.100 0 67.900zM284.200 99.800L21.600 362.400.4 483.900c-2.900 16.400 11.400 30.600 27.800 27.800l121.500-21.300 262.600-262.600c4.700-4.700 4.700-12.300 0-17l-111-111c-4.800-4.700-12.400-4.700-17.100 0zM124.100 339.900c-5.500-5.500-5.500-14.300 0-19.800l154-154c5.500-5.500 14.300-5.500 19.800 0s5.500 14.300 0 19.800l-154 154c-5.500 5.500-14.300 5.500-19.800 0zM88 424h48v36.300l-64.500 11.300-31.100-31.100L51.700 376H88v48z"/></svg>
<svg style="left:1782px;top:585px" width="20" height="21" viewBox="0 0 20 21"><path fill="#0000ff" transform="translate(0.200,0.600) scale(0.03672)" d="M248 8C111 8 0 119 0 256s111 248 248 248 248-111 248-248S385 8 248 8zm-80 168c17.700 0 32 14.300 32 32s-14.300 32-32 32-32-14.300-32-32 14.300-32 32-32zm176 192H152c-21.200 0-21.200-32 0-32h192c21.200 0 21.200 32 0 32zm-16-128c-17.700 0-32-14.300-32-32s14.300-32 32-32 32 14.300 32 32-14.300 32-32 32z"/></svg>
<div class="row odd" style="top:617px"><span class="c" style="left:7.500px;width:40px">4</span><span class="n" style="left:84.300px">25000000004</span><span class="k" style="left:175.300px">A<b>プロジェクト</b></span><span style="left:315px">検査</span><span class="n" style="left:493.300px">2025<i>/</i>01<i>/</i>01</span><span class="n" style="left:606.300px">2025<i>/</i>12<i>/</i>31</span><span class="n r" style="right:1006.6px">300,000</span><span class="n r" style="right:896.4px">150,000</span><span class="n r" style="right:770px">150,000</span><span class="n r" style="right:670px">90.00</span><span class="n r" style="right:565px">83.33</span><span class="n r" style="right:460px">6.67</span><span class="n r" style="right:335px">1,666</span><span class="n r" style="right:210px">1,800</span><span class="n r" style="right:85px">134</span></div>
<svg style="left:831px;top:629px" width="16" height="16" viewBox="0 0 16 16"><path fill="#000" transform="translate(0.000,0.800) scale(0.02773)" d="M497.9 142.1l-46.1 46.1c-4.700 4.700-12.300 4.700-17 0l-111-111c-4.700-4.700-4.700-12.300 0-17l46.100-46.100c18.700-18.700 49.100-18.700 67.900 0l60.100 60.100c18.800 18.700 18.800 49.100 0 67.900zM284.200 99.800L21.600 362.400.4 483.900c-2.900 16.400 11.400 30.600 27.800 27.800l121.500-21.300 262.600-262.600c4.700-4.700 4.700-12.300 0-17l-111-111c-4.800-4.700-12.400-4.700-17.100 0zM124.100 339.900c-5.500-5.500-5.500-14.300 0-19.800l154-154c5.500-5.500 14.300-5.500 19.800 0s5.500 14.300 0 19.800l-154 154c-5.500 5.500-14.300 5.500-19.800 0zM88 424h48v36.300l-64.500 11.300-31.100-31.100L51.700 376H88v48z"/></svg>
<svg style="left:941px;top:629px" width="16" height="16" viewBox="0 0 16 16"><path fill="#000" transform="translate(0.000,0.800) scale(0.02773)" d="M497.9 142.1l-46.1 46.1c-4.700 4.700-12.300 4.700-17 0l-111-111c-4.700-4.700-4.700-12.300 0-17l46.100-46.100c18.700-18.700 49.100-18.700 67.900 0l60.100 60.100c18.800 18.700 18.800 49.100 0 67.900zM284.200 99.800L21.600 362.400.4 483.900c-2.900 16.400 11.400 30.600 27.800 27.800l121.500-21.300 262.600-262.600c4.700-4.700 4.700-12.300 0-17l-111-111c-4.800-4.700-12.400-4.700-17.100 0zM124.100 339.900c-5.500-5.500-5.500-14.300 0-19.800l154-154c5.500-5.500 14.300-5.500 19.800 0s5.500 14.300 0 19.800l-154 154c-5.500 5.500-14.300 5.500-19.800 0zM88 424h48v36.300l-64.500 11.300-31.100-31.100L51.700 376H88v48z"/></svg>
<svg style="left:1782px;top:626px" width="20" height="21" viewBox="0 0 20 21"><path fill="#000000" transform="translate(0.200,0.600) scale(0.03672)" d="M248 8C111 8 0 119 0 256s111 248 248 248 248-111 248-248S385 8 248 8zM112 223.400c3.300-42.100 32.200-71.400 56-71.400s52.700 29.300 56 71.400c.7 8.600-10.800 11.900-14.900 4.500l-9.500-17c-7.700-13.700-19.200-21.600-31.500-21.600s-23.800 7.900-31.500 21.600l-9.500 17c-4.300 7.400-15.800 4-15.100-4.500zm250.800 122.800C334.300 380.400 292.500 400 248 400s-86.300-19.600-114.800-53.800c-13.500-16.300 11-36.700 24.600-20.500 22.400 26.900 55.200 42.200 90.200 42.200s67.800-15.400 90.200-42.200c13.600-16.200 38.100 4.300 24.600 20.500zm6.200-118.300l-9.500-17c-7.700-13.700-19.200-21.600-31.500-21.600s-23.800 7.900-31.500 21.600l-9.500 17c-4.100 7.300-15.600 4-14.900-4.500 3.300-42.100 32.200-71.400 56-71.400s52.700 29.300 56 71.400c.6 8.600-11 11.900-15.100 4.500z"/></svg>
<div class="row" style="top:658px"><span class="c" style="left:7.500px;width:40px">5</span><span class="n" style="left:84.300px">25000000005</span><span class="k" style="left:175.300px">A<b>プロジェクト</b></span><span style="left:315px">梱包</span><span class="n" style="left:493.300px">2025<i>/</i>01<i>/</i>01</span><span class="n" style="left:606.300px">2025<i>/</i>12<i>/</i>31</span><span class="n r" style="right:1006.6px">2,000,000</span><span class="n r" style="right:896.4px">1,900,000</span><span class="n r" style="right:770px">100,000</span><span class="n r" style="right:670px">50.00</span><span class="n r" style="right:565px">58.33</span><span class="n r neg" style="right:460px">-8.33</span><span class="n r" style="right:335px">2,000</span><span class="n r" style="right:210px">1,714</span><span class="n r neg" style="right:85px">-286</span></div>
<svg style="left:831px;top:670px" width="16" height="16" viewBox="0 0 16 16"><path fill="#000" transform="translate(0.000,0.800) scale(0.02773)" d="M497.9 142.1l-46.1 46.1c-4.700 4.700-12.300 4.700-17 0l-111-111c-4.700-4.700-4.700-12.300 0-17l46.100-46.100c18.700-18.700 49.100-18.700 67.900 0l60.100 60.100c18.800 18.700 18.800 49.100 0 67.900zM284.200 99.800L21.600 362.400.4 483.900c-2.900 16.400 11.400 30.600 27.800 27.800l121.500-21.300 262.600-262.600c4.700-4.700 4.700-12.300 0-17l-111-111c-4.800-4.700-12.400-4.700-17.100 0zM124.100 339.900c-5.500-5.500-5.500-14.300 0-19.800l154-154c5.500-5.500 14.300-5.500 19.800 0s5.500 14.300 0 19.800l-154 154c-5.500 5.500-14.300 5.500-19.800 0zM88 424h48v36.300l-64.500 11.300-31.100-31.100L51.700 376H88v48z"/></svg>
<svg style="left:941px;top:670px" width="16" height="16" viewBox="0 0 16 16"><path fill="#000" transform="translate(0.000,0.800) scale(0.02773)" d="M497.9 142.1l-46.1 46.1c-4.700 4.700-12.300 4.700-17 0l-111-111c-4.700-4.700-4.700-12.300 0-17l46.100-46.100c18.700-18.700 49.100-18.700 67.900 0l60.100 60.100c18.800 18.700 18.800 49.100 0 67.900zM284.200 99.800L21.600 362.400.4 483.900c-2.900 16.400 11.400 30.600 27.800 27.800l121.500-21.300 262.600-262.600c4.700-4.700 4.700-12.300 0-17l-111-111c-4.800-4.700-12.400-4.700-17.100 0zM124.100 339.900c-5.500-5.500-5.500-14.300 0-19.800l154-154c5.500-5.500 14.300-5.500 19.800 0s5.500 14.300 0 19.800l-154 154c-5.500 5.500-14.300 5.500-19.800 0zM88 424h48v36.300l-64.500 11.300-31.100-31.100L51.700 376H88v48z"/></svg>
<svg style="left:1782px;top:667px" width="20" height="21" viewBox="0 0 20 21"><path fill="#ff0000" transform="translate(0.200,0.600) scale(0.03672)" d="M248 8C111 8 0 119 0 256s111 248 248 248 248-111 248-248S385 8 248 8zm80 168c17.700 0 32 14.300 32 32s-14.300 32-32 32-32-14.300-32-32 14.300-32 32-32zm-160 0c17.700 0 32 14.300 32 32s-14.300 32-32 32-32-14.300-32-32 14.300-32 32-32zm170.200 218.200C315.800 367.400 282.900 352 248 352s-67.800 15.400-90.200 42.200c-13.500 16.300-38.100-4.200-24.600-20.500C161.700 339.600 203.600 320 248 320s86.300 19.600 114.700 53.800c13.600 16.200-11 36.700-24.500 20.400z"/></svg>
<div class="row odd" style="top:699px"><span class="c" style="left:7.500px;width:40px">6</span><span class="n" style="left:84.300px">25000000006</span><span class="k" style="left:175.300px">B<b>プロジェクト</b></span><span style="left:315px">要件定義</span><span class="n" style="left:493.300px">2025<i>/</i>01<i>/</i>01</span><span class="n" style="left:606.300px">2025<i>/</i>08<i>/</i>31</span><span class="n r" style="right:1006.6px">3,000,000</span><span class="n r" style="right:896.4px">2,500,000</span><span class="n r" style="right:770px">500,000</span><span class="n r" style="right:670px">50.00</span><span class="n r" style="right:565px">46.83</span><span class="n r" style="right:460px">3.17</span><span class="n r" style="right:335px">10,000</span><span class="n r" style="right:210px">10,676</span><span class="n r" style="right:85px">676</span></div>
<svg style="left:831px;top:711px" width="16" height="16" viewBox="0 0 16 16"><path fill="#000" transform="translate(0.000,0.800) scale(0.02773)" d="M497.9 142.1l-46.1 46.1c-4.700 4.700-12.300 4.700-17 0l-111-111c-4.700-4.700-4.700-12.300 0-17l46.100-46.100c18.700-18.700 49.100-18.700 67.900 0l60.100 60.100c18.800 18.700 18.800 49.100 0 67.900zM284.200 99.800L21.600 362.400.4 483.900c-2.900 16.400 11.400 30.600 27.800 27.800l121.500-21.300 262.600-262.600c4.700-4.700 4.700-12.300 0-17l-111-111c-4.800-4.700-12.400-4.700-17.100 0zM124.100 339.900c-5.500-5.500-5.500-14.300 0-19.800l154-154c5.500-5.500 14.300-5.500 19.800 0s5.500 14.300 0 19.800l-154 154c-5.500 5.500-14.300 5.500-19.800 0zM88 424h48v36.300l-64.500 11.300-31.100-31.100L51.700 376H88v48z"/></svg>
<svg style="left:941px;top:711px" width="16" height="16" viewBox="0 0 16 16"><path fill="#000" transform="translate(0.000,0.800) scale(0.02773)" d="M497.9 142.1l-46.1 46.1c-4.700 4.700-12.300 4.700-17 0l-111-111c-4.700-4.700-4.700-12.300 0-17l46.100-46.100c18.700-18.700 49.100-18.700 67.900 0l60.100 60.100c18.800 18.700 18.800 49.100 0 67.900zM284.200 99.800L21.600 362.400.4 483.900c-2.900 16.400 11.400 30.600 27.800 27.800l121.500-21.300 262.600-262.600c4.700-4.700 4.700-12.300 0-17l-111-111c-4.800-4.700-12.400-4.700-17.100 0zM124.100 339.900c-5.500-5.500-5.500-14.300 0-19.800l154-154c5.500-5.500 14.300-5.500 19.800 0s5.500 14.300 0 19.800l-154 154c-5.500 5.500-14.300 5.500-19.800 0zM88 424h48v36.300l-64.500 11.300-31.100-31.100L51.700 376H88v48z"/></svg>
<svg style="left:1782px;top:708px" width="20" height="21" viewBox="0 0 20 21"><path fill="#000000" transform="translate(0.200,0.600) scale(0.03672)" d="M248 8C111 8 0 119 0 256s111 248 248 248 248-111 248-248S385 8 248 8zM112 223.400c3.300-42.100 32.200-71.400 56-71.400s52.700 29.300 56 71.400c.7 8.600-10.800 11.900-14.900 4.500l-9.500-17c-7.700-13.700-19.200-21.600-31.500-21.600s-23.800 7.900-31.500 21.600l-9.500 17c-4.300 7.400-15.800 4-15.100-4.500zm250.800 122.800C334.300 380.400 292.500 400 248 400s-86.300-19.600-114.800-53.800c-13.500-16.300 11-36.700 24.600-20.500 22.400 26.900 55.200 42.200 90.200 42.200s67.800-15.400 90.200-42.200c13.600-16.200 38.100 4.300 24.600 20.500zm6.200-118.300l-9.500-17c-7.700-13.700-19.200-21.600-31.500-21.600s-23.800 7.900-31.500 21.600l-9.500 17c-4.100 7.300-15.600 4-14.900-4.500 3.300-42.100 32.200-71.400 56-71.400s52.700 29.300 56 71.400c.6 8.600-11 11.900-15.100 4.500z"/></svg>
<div class="row" style="top:740px"><span class="c" style="left:7.500px;width:40px">7</span><span class="n" style="left:84.300px">25000000007</span><span class="k" style="left:175.300px">B<b>プロジェクト</b></span><span style="left:315px">基本設計・詳細設計</span><span class="n" style="left:493.300px">2025<i>/</i>01<i>/</i>01</span><span class="n" style="left:606.300px">2025<i>/</i>08<i>/</i>31</span><span class="n r" style="right:1006.6px">8,000,000</span><span class="n r" style="right:896.4px">6,500,000</span><span class="n r" style="right:770px">1,500,000</span><span class="n r" style="right:670px">80.00</span><span class="n r" style="right:565px">80.00</span><span class="n r" style="right:460px">0.00</span><span class="n r" style="right:335px">18,750</span><span class="n r" style="right:210px">18,750</span><span class="n r" style="right:85px">0</span></div>
<svg style="left:831px;top:752px" width="16" height="16" viewBox="0 0 16 16"><path fill="#000" transform="translate(0.000,0.800) scale(0.02773)" d="M497.9 142.1l-46.1 46.1c-4.700 4.700-12.300 4.700-17 0l-111-111c-4.700-4.700-4.700-12.300 0-17l46.100-46.100c18.700-18.700 49.100-18.700 67.900 0l60.100 60.100c18.800 18.700 18.800 49.100 0 67.900zM284.200 99.800L21.600 362.400.4 483.900c-2.900 16.400 11.400 30.600 27.800 27.800l121.500-21.300 262.600-262.600c4.700-4.700 4.700-12.300 0-17l-111-111c-4.800-4.700-12.400-4.700-17.100 0zM124.100 339.900c-5.500-5.500-5.500-14.300 0-19.800l154-154c5.500-5.500 14.300-5.500 19.800 0s5.500 14.300 0 19.800l-154 154c-5.500 5.500-14.300 5.500-19.800 0zM88 424h48v36.300l-64.500 11.300-31.100-31.100L51.700 376H88v48z"/></svg>
<svg style="left:941px;top:752px" width="16" height="16" viewBox="0 0 16 16"><path fill="#000" transform="translate(0.000,0.800) scale(0.02773)" d="M497.9 142.1l-46.1 46.1c-4.700 4.700-12.300 4.700-17 0l-111-111c-4.700-4.700-4.700-12.300 0-17l46.100-46.100c18.700-18.700 49.100-18.700 67.900 0l60.100 60.100c18.800 18.700 18.800 49.100 0 67.900zM284.200 99.800L21.600 362.400.4 483.900c-2.900 16.400 11.400 30.600 27.800 27.800l121.500-21.300 262.600-262.600c4.700-4.700 4.700-12.300 0-17l-111-111c-4.800-4.700-12.400-4.700-17.100 0zM124.100 339.900c-5.500-5.500-5.500-14.300 0-19.800l154-154c5.500-5.500 14.300-5.500 19.800 0s5.500 14.300 0 19.800l-154 154c-5.500 5.500-14.300 5.500-19.800 0zM88 424h48v36.300l-64.500 11.300-31.100-31.100L51.700 376H88v48z"/></svg>
<svg style="left:1782px;top:749px" width="20" height="21" viewBox="0 0 20 21"><path fill="#0000ff" transform="translate(0.200,0.600) scale(0.03672)" d="M248 8C111 8 0 119 0 256s111 248 248 248 248-111 248-248S385 8 248 8zm-80 168c17.700 0 32 14.300 32 32s-14.300 32-32 32-32-14.300-32-32 14.300-32 32-32zm176 192H152c-21.200 0-21.200-32 0-32h192c21.200 0 21.200 32 0 32zm-16-128c-17.700 0-32-14.300-32-32s14.300-32 32-32 32 14.300 32 32-14.300 32-32 32z"/></svg>
<div class="row odd" style="top:781px"><span class="c" style="left:7.500px;width:40px">8</span><span class="n" style="left:84.300px">25000000008</span><span class="k" style="left:175.300px">B<b>プロジェクト</b></span><span style="left:315px">製造</span><span class="n" style="left:493.300px">2025<i>/</i>01<i>/</i>01</span><span class="n" style="left:606.300px">2025<i>/</i>08<i>/</i>31</span><span class="n r" style="right:1006.6px">30,000,000</span><span class="n r" style="right:896.4px">25,000,000</span><span class="n r" style="right:770px">5,000,000</span><span class="n r" style="right:670px">200.00</span><span class="n r" style="right:565px">206.67</span><span class="n r neg" style="right:460px">-6.67</span><span class="n r" style="right:335px">25,000</span><span class="n r" style="right:210px">24,193</span><span class="n r neg" style="right:85px">-807</span></div>
<svg style="left:831px;top:793px" width="16" height="16" viewBox="0 0 16 16"><path fill="#000" transform="translate(0.000,0.800) scale(0.02773)" d="M497.9 142.1l-46.1 46.1c-4.700 4.700-12.300 4.700-17 0l-111-111c-4.700-4.700-4.700-12.300 0-17l46.100-46.100c18.700-18.700 49.100-18.700 67.900 0l60.100 60.100c18.800 18.700 18.800 49.100 0 67.900zM284.200 99.800L21.600 362.400.4 483.900c-2.900 16.400 11.400 30.600 27.800 27.800l121.500-21.300 262.600-262.600c4.700-4.700 4.700-12.300 0-17l-111-111c-4.800-4.700-12.400-4.700-17.100 0zM124.100 339.900c-5.500-5.500-5.500-14.300 0-19.800l154-154c5.500-5.500 14.300-5.500 19.800 0s5.500 14.300 0 19.800l-154 154c-5.500 5.500-14.300 5.500-19.800 0zM88 424h48v36.300l-64.500 11.300-31.100-31.100L51.700 376H88v48z"/></svg>
<svg style="left:941px;top:793px" width="16" height="16" viewBox="0 0 16 16"><path fill="#000" transform="translate(0.000,0.800) scale(0.02773)" d="M497.9 142.1l-46.1 46.1c-4.700 4.700-12.300 4.700-17 0l-111-111c-4.700-4.700-4.700-12.300 0-17l46.100-46.100c18.700-18.700 49.100-18.700 67.900 0l60.100 60.100c18.800 18.700 18.800 49.100 0 67.900zM284.200 99.800L21.600 362.400.4 483.900c-2.900 16.400 11.400 30.600 27.800 27.800l121.500-21.300 262.600-262.600c4.700-4.700 4.700-12.300 0-17l-111-111c-4.800-4.700-12.400-4.700-17.100 0zM124.100 339.900c-5.500-5.500-5.500-14.300 0-19.800l154-154c5.500-5.500 14.300-5.500 19.800 0s5.500 14.300 0 19.800l-154 154c-5.500 5.500-14.300 5.500-19.800 0zM88 424h48v36.300l-64.500 11.300-31.100-31.100L51.700 376H88v48z"/></svg>
<svg style="left:1782px;top:790px" width="20" height="21" viewBox="0 0 20 21"><path fill="#ff0000" transform="translate(0.200,0.600) scale(0.03672)" d="M248 8C111 8 0 119 0 256s111 248 248 248 248-111 248-248S385 8 248 8zm80 168c17.700 0 32 14.300 32 32s-14.300 32-32 32-32-14.300-32-32 14.300-32 32-32zm-160 0c17.700 0 32 14.300 32 32s-14.300 32-32 32-32-14.300-32-32 14.300-32 32-32zm170.200 218.200C315.800 367.400 282.900 352 248 352s-67.800 15.400-90.200 42.200c-13.500 16.300-38.100-4.200-24.600-20.500C161.700 339.600 203.600 320 248 320s86.300 19.600 114.700 53.800c13.600 16.200-11 36.700-24.500 20.400z"/></svg>
<div class="row" style="top:822px"><span class="c" style="left:7.500px;width:40px">9</span><span class="n" style="left:84.300px">25000000009</span><span class="k" style="left:175.300px">B<b>プロジェクト</b></span><span style="left:315px">試験</span><span class="n" style="left:493.300px">2025<i>/</i>01<i>/</i>01</span><span class="n" style="left:606.300px">2025<i>/</i>08<i>/</i>31</span><span class="n r" style="right:1006.6px">12,000,000</span><span class="n r" style="right:896.4px">9,500,000</span><span class="n r" style="right:770px">2,500,000</span><span class="n r" style="right:670px">233.33</span><span class="n r" style="right:565px">186.35</span><span class="n r" style="right:460px">46.98</span><span class="n r" style="right:335px">10,714</span><span class="n r" style="right:210px">13,415</span><span class="n r" style="right:85px">2,701</span></div>
<svg style="left:831px;top:834px" width="16" height="16" viewBox="0 0 16 16"><path fill="#000" transform="translate(0.000,0.800) scale(0.02773)" d="M497.9 142.1l-46.1 46.1c-4.700 4.700-12.300 4.700-17 0l-111-111c-4.700-4.700-4.700-12.300 0-17l46.100-46.100c18.700-18.700 49.100-18.700 67.900 0l60.100 60.100c18.800 18.700 18.800 49.100 0 67.900zM284.200 99.800L21.600 362.400.4 483.900c-2.900 16.400 11.400 30.600 27.800 27.800l121.500-21.300 262.600-262.600c4.700-4.700 4.700-12.300 0-17l-111-111c-4.800-4.700-12.400-4.700-17.100 0zM124.100 339.900c-5.500-5.500-5.500-14.300 0-19.800l154-154c5.500-5.500 14.300-5.500 19.800 0s5.500 14.300 0 19.800l-154 154c-5.500 5.500-14.300 5.500-19.800 0zM88 424h48v36.300l-64.500 11.300-31.100-31.100L51.700 376H88v48z"/></svg>
<svg style="left:941px;top:834px" width="16" height="16" viewBox="0 0 16 16"><path fill="#000" transform="translate(0.000,0.800) scale(0.02773)" d="M497.9 142.1l-46.1 46.1c-4.700 4.700-12.300 4.700-17 0l-111-111c-4.700-4.700-4.700-12.300 0-17l46.100-46.100c18.700-18.700 49.100-18.700 67.900 0l60.100 60.100c18.800 18.700 18.800 49.100 0 67.900zM284.200 99.800L21.600 362.400.4 483.900c-2.900 16.400 11.400 30.600 27.800 27.800l121.500-21.300 262.600-262.600c4.700-4.700 4.700-12.300 0-17l-111-111c-4.800-4.700-12.400-4.700-17.100 0zM124.100 339.900c-5.500-5.500-5.500-14.300 0-19.800l154-154c5.500-5.500 14.300-5.500 19.800 0s5.500 14.300 0 19.800l-154 154c-5.500 5.500-14.300 5.500-19.800 0zM88 424h48v36.300l-64.500 11.300-31.100-31.100L51.700 376H88v48z"/></svg>
<svg style="left:1782px;top:831px" width="20" height="21" viewBox="0 0 20 21"><path fill="#000000" transform="translate(0.200,0.600) scale(0.03672)" d="M248 8C111 8 0 119 0 256s111 248 248 248 248-111 248-248S385 8 248 8zM112 223.400c3.300-42.100 32.200-71.400 56-71.400s52.700 29.300 56 71.400c.7 8.600-10.800 11.900-14.900 4.500l-9.500-17c-7.700-13.700-19.200-21.600-31.500-21.600s-23.800 7.900-31.500 21.600l-9.500 17c-4.300 7.400-15.800 4-15.100-4.500zm250.800 122.800C334.300 380.400 292.500 400 248 400s-86.300-19.600-114.800-53.800c-13.500-16.300 11-36.700 24.600-20.500 22.400 26.900 55.200 42.200 90.200 42.200s67.800-15.400 90.200-42.200c13.600-16.200 38.100 4.300 24.600 20.500zm6.200-118.300l-9.500-17c-7.700-13.700-19.200-21.600-31.500-21.600s-23.800 7.900-31.500 21.600l-9.500 17c-4.100 7.300-15.600 4-14.900-4.500 3.300-42.100 32.200-71.400 56-71.400s52.700 29.300 56 71.400c.6 8.600-11 11.900-15.100 4.500z"/></svg>
<div class="row odd" style="top:863px"><span class="c" style="left:7.500px;width:40px">10</span><span class="n" style="left:84.300px">25000000010</span><span class="k" style="left:175.300px">B<b>プロジェクト</b></span><span style="left:315px">リリース</span><span class="n" style="left:493.300px">2025<i>/</i>01<i>/</i>01</span><span class="n" style="left:606.300px">2025<i>/</i>08<i>/</i>31</span><span class="n r" style="right:1006.6px">8,900,000</span><span class="n r" style="right:896.4px">8,250,000</span><span class="n r" style="right:770px">650,000</span><span class="n r" style="right:670px">35.00</span><span class="n r" style="right:565px">40.00</span><span class="n r neg" style="right:460px">-5.00</span><span class="n r" style="right:335px">18,571</span><span class="n r" style="right:210px">16,250</span><span class="n r neg" style="right:85px">-2,321</span></div>
<svg style="left:831px;top:875px" width="16" height="16" viewBox="0 0 16 16"><path fill="#000" transform="translate(0.000,0.800) scale(0.02773)" d="M497.9 142.1l-46.1 46.1c-4.700 4.700-12.300 4.700-17 0l-111-111c-4.700-4.700-4.700-12.300 0-17l46.100-46.100c18.700-18.700 49.100-18.700 67.900 0l60.100 60.100c18.800 18.700 18.800 49.100 0 67.900zM284.200 99.800L21.600 362.400.4 483.900c-2.900 16.400 11.400 30.600 27.800 27.800l121.500-21.300 262.600-262.600c4.700-4.700 4.700-12.300 0-17l-111-111c-4.800-4.700-12.400-4.700-17.100 0zM124.100 339.900c-5.500-5.500-5.500-14.300 0-19.800l154-154c5.500-5.500 14.300-5.500 19.800 0s5.500 14.300 0 19.800l-154 154c-5.500 5.500-14.300 5.500-19.800 0zM88 424h48v36.300l-64.500 11.300-31.100-31.100L51.700 376H88v48z"/></svg>
<svg style="left:941px;top:875px" width="16" height="16" viewBox="0 0 16 16"><path fill="#000" transform="translate(0.000,0.800) scale(0.02773)" d="M497.9 142.1l-46.1 46.1c-4.700 4.700-12.300 4.700-17 0l-111-111c-4.700-4.700-4.700-12.300 0-17l46.100-46.100c18.700-18.700 49.100-18.700 67.900 0l60.100 60.100c18.800 18.700 18.800 49.100 0 67.900zM284.200 99.800L21.600 362.400.4 483.900c-2.900 16.400 11.400 30.600 27.800 27.800l121.500-21.300 262.600-262.600c4.700-4.700 4.700-12.300 0-17l-111-111c-4.800-4.700-12.400-4.700-17.100 0zM124.100 339.900c-5.500-5.500-5.500-14.300 0-19.800l154-154c5.500-5.500 14.300-5.500 19.800 0s5.500 14.300 0 19.800l-154 154c-5.500 5.500-14.300 5.500-19.800 0zM88 424h48v36.300l-64.500 11.300-31.100-31.100L51.700 376H88v48z"/></svg>
<svg style="left:1782px;top:872px" width="20" height="21" viewBox="0 0 20 21"><path fill="#ff0000" transform="translate(0.200,0.600) scale(0.03672)" d="M248 8C111 8 0 119 0 256s111 248 248 248 248-111 248-248S385 8 248 8zm80 168c17.700 0 32 14.300 32 32s-14.300 32-32 32-32-14.300-32-32 14.300-32 32-32zm-160 0c17.700 0 32 14.300 32 32s-14.300 32-32 32-32-14.300-32-32 14.300-32 32-32zm170.200 218.200C315.800 367.400 282.900 352 248 352s-67.800 15.400-90.200 42.200c-13.500 16.300-38.100-4.200-24.600-20.500C161.700 339.600 203.600 320 248 320s86.300 19.600 114.700 53.800c13.600 16.200-11 36.700-24.500 20.400z"/></svg>
<div class="row" style="top:904px"><span class="c" style="left:7.500px;width:40px">11</span><span class="n" style="left:84.300px">25000000011</span><span class="k" style="left:175.300px">C<b>プロジェクト</b></span><span style="left:315px">要件定義</span><span class="n" style="left:493.300px">2025<i>/</i>09<i>/</i>01</span><span class="n" style="left:606.300px">2025<i>/</i>12<i>/</i>31</span><span class="n r" style="right:1006.6px">250,000</span><span class="n r" style="right:896.4px">150,000</span><span class="n r" style="right:770px">100,000</span><span class="n r" style="right:670px">50.00</span><span class="n r" style="right:565px">33.33</span><span class="n r" style="right:460px">16.67</span><span class="n r" style="right:335px">2,000</span><span class="n r" style="right:210px">3,000</span><span class="n r" style="right:85px">1,000</span></div>
<svg style="left:831px;top:916px" width="16" height="16" viewBox="0 0 16 16"><path fill="#000" transform="translate(0.000,0.800) scale(0.02773)" d="M497.9 142.1l-46.1 46.1c-4.700 4.700-12.300 4.700-17 0l-111-111c-4.700-4.700-4.700-12.300 0-17l46.100-46.100c18.700-18.700 49.100-18.700 67.900 0l60.100 60.100c18.800 18.700 18.800 49.100 0 67.900zM284.200 99.800L21.600 362.400.4 483.900c-2.900 16.400 11.400 30.600 27.800 27.800l121.500-21.300 262.600-262.600c4.700-4.700 4.700-12.300 0-17l-111-111c-4.800-4.700-12.400-4.700-17.100 0zM124.100 339.900c-5.500-5.500-5.500-14.300 0-19.800l154-154c5.500-5.500 14.300-5.500 19.800 0s5.500 14.300 0 19.800l-154 154c-5.500 5.500-14.300 5.500-19.800 0zM88 424h48v36.300l-64.500 11.300-31.100-31.100L51.700 376H88v48z"/></svg>
<svg style="left:941px;top:916px" width="16" height="16" viewBox="0 0 16 16"><path fill="#000" transform="translate(0.000,0.800) scale(0.02773)" d="M497.9 142.1l-46.1 46.1c-4.700 4.700-12.300 4.700-17 0l-111-111c-4.700-4.700-4.700-12.300 0-17l46.100-46.100c18.700-18.700 49.100-18.700 67.900 0l60.100 60.100c18.800 18.700 18.800 49.100 0 67.900zM284.200 99.800L21.600 362.400.4 483.900c-2.900 16.400 11.400 30.600 27.800 27.800l121.500-21.300 262.600-262.600c4.700-4.700 4.700-12.300 0-17l-111-111c-4.800-4.700-12.400-4.700-17.100 0zM124.100 339.900c-5.500-5.500-5.500-14.300 0-19.800l154-154c5.500-5.500 14.300-5.500 19.800 0s5.500 14.300 0 19.800l-154 154c-5.500 5.500-14.300 5.500-19.800 0zM88 424h48v36.300l-64.500 11.300-31.100-31.100L51.700 376H88v48z"/></svg>
<svg style="left:1782px;top:913px" width="20" height="21" viewBox="0 0 20 21"><path fill="#000000" transform="translate(0.200,0.600) scale(0.03672)" d="M248 8C111 8 0 119 0 256s111 248 248 248 248-111 248-248S385 8 248 8zM112 223.400c3.300-42.100 32.200-71.400 56-71.400s52.700 29.300 56 71.400c.7 8.600-10.800 11.900-14.900 4.500l-9.500-17c-7.700-13.700-19.200-21.600-31.500-21.600s-23.800 7.900-31.500 21.600l-9.500 17c-4.300 7.400-15.800 4-15.100-4.500zm250.800 122.800C334.300 380.400 292.500 400 248 400s-86.300-19.600-114.800-53.800c-13.500-16.300 11-36.700 24.600-20.500 22.400 26.900 55.200 42.200 90.200 42.200s67.800-15.400 90.200-42.200c13.600-16.200 38.100 4.300 24.600 20.500zm6.200-118.300l-9.500-17c-7.700-13.700-19.200-21.600-31.500-21.600s-23.800 7.900-31.500 21.600l-9.500 17c-4.100 7.300-15.600 4-14.900-4.500 3.300-42.100 32.200-71.400 56-71.400s52.700 29.300 56 71.400c.6 8.600-11 11.900-15.100 4.500z"/></svg>
<div class="abs" style="left:40px;top:493px;width:1791px;height:1px;background:#fff"></div>
<svg style="left:1831px;top:493px" width="15" height="451" viewBox="0 0 15 451"><path d="M3.900 12.100L7.550 6.800L11.200 12.100Z" fill="#8b8b8b" stroke="#8b8b8b" stroke-width="1.600" stroke-linejoin="round"/><rect x="3.400" y="19" width="9" height="460" rx="4.500" fill="#8b8b8b"/></svg>
</body>
</html>
